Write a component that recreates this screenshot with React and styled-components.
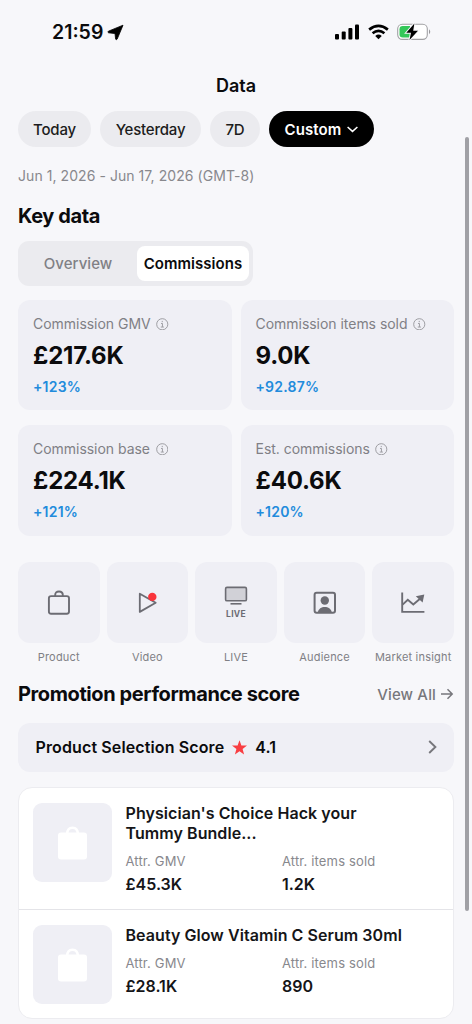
import React, { useState } from "react";
import styled, { createGlobalStyle } from 'styled-components'

const GlobalStyle = createGlobalStyle`
*{
  box-sizing: border-box;
}
body{
  margin: 0;
  background: #f7f7fa;
  color: #0b0b0d;
  font-family: Inter, "Liberation Sans", sans-serif;
}
button{
  border: none;
  padding: 0;
  background: none;
  color: inherit;
  font: inherit;
}
svg{
  display: block;
  flex-shrink: 0;
}
`

const Screen = styled.div`
position: relative;
width: 472px;
height: 1024px;
padding: 0 18px;
overflow: hidden;
background: #f7f7fa;
`

const StatusBar = styled.header`
display: flex;
justify-content: space-between;
align-items: center;
height: 64px;
padding: 0 22px 0 34px;
`

const Clock = styled.div`
display: flex;
align-items: center;
gap: 4px;
font-size: 19.5px;
font-weight: 600;
`

const StatusIcons = styled.div`
display: flex;
align-items: center;
gap: 8px;
`

const PageTitle = styled.h1`
margin: 10px 0 13px;
font-size: 18px;
font-weight: 600;
line-height: 24px;
text-align: center;
`

const Chips = styled.div`
display: flex;
gap: 9px;
`

const Chip = styled.button`
display: flex;
justify-content: center;
align-items: center;
gap: 6px;
width: ${props => props.width}px;
height: 36px;
border-radius: 18px;
background: ${props => props.selected ? '#000' : '#ebebef'};
color: ${props => props.selected ? '#fff' : '#1c1c20'};
font-size: 15px;
font-weight: ${props => props.selected ? 600 : 500};
letter-spacing: ${props => props.selected ? 0.1 : -0.2}px;
`

const DateRange = styled.div`
margin-top: 19px;
color: #88888d;
font-size: 14px;
letter-spacing: 0.06px;
line-height: 20px;
`

const SectionTitle = styled.h2`
margin: 0;
font-size: 20px;
font-weight: 700;
letter-spacing: -0.4px;
line-height: 26px;
`

const KeyTitle = styled(SectionTitle)`
margin: 17px 0 12px;
`

const Segments = styled.div`
display: flex;
width: 235px;
height: 45px;
padding: 5px 4px 5px 0;
border-radius: 11px;
background: #ebebef;
`

const Segment = styled.button`
flex: ${props => props.active ? '0 0 112px' : 1};
padding-left: ${props => props.active ? 0 : 1}px;
border-radius: 8px;
background: ${props => props.active ? '#fff' : 'transparent'};
color: ${props => props.active ? '#0b0b0d' : '#808085'};
font-size: 15px;
font-weight: ${props => props.active ? 600 : 500};
letter-spacing: 0.05px;
`

const Metrics = styled.div`
display: grid;
grid-template-columns: 1fr 1fr;
grid-template-rows: 110px 111px;
gap: 15px 9px;
margin-top: 14px;
`

const Metric = styled.div`
padding: 14px 15px 12px;
border-radius: 12px;
background: #efeff5;
`

const MetricLabel = styled.div`
display: flex;
align-items: center;
gap: 5.5px;
color: #808085;
font-size: 14px;
line-height: 20px;
letter-spacing: -0.03px;
white-space: nowrap;
`

const MetricValue = styled.div`
margin-top: 7px;
font-size: 24px;
font-weight: 700;
line-height: 30px;
letter-spacing: -0.2px;
`

const Change = styled.div`
margin-top: 6px;
color: #218bdc;
font-size: 14px;
font-weight: 600;
line-height: 20px;
letter-spacing: 0.2px;
`

const Shortcuts = styled.nav`
display: grid;
grid-template-columns: repeat(5, 1fr);
gap: 7px;
margin-top: 26px;
`

const Shortcut = styled.div`
display: flex;
flex-direction: column;
align-items: center;
min-width: 0;
color: #808085;
font-size: 11px;
line-height: 14px;
letter-spacing: 0.2px;
white-space: nowrap;
`

const Tile = styled.div`
display: flex;
flex-direction: column;
justify-content: center;
align-items: center;
width: 100%;
height: 81px;
margin-bottom: 7px;
border-radius: 12px;
background: #efeff5;
color: #6c6c73;
`

const LiveText = styled.span`
margin: 3px 0 -1px;
font-size: 8.5px;
font-weight: 700;
line-height: 11px;
letter-spacing: 0.3px;
`

const PromotionHead = styled.div`
display: flex;
justify-content: space-between;
align-items: center;
height: 26px;
margin-top: 17px;
`

const ViewAll = styled.div`
display: flex;
align-items: center;
gap: 4px;
color: #77777c;
font-size: 15px;
font-weight: 500;
letter-spacing: 0.15px;
`

const ScoreBar = styled.div`
display: flex;
align-items: center;
height: 49px;
margin-top: 16px;
padding: 0 17px 1px 17.5px;
border-radius: 12px;
background: #efeff5;
font-size: 16px;
font-weight: 600;
letter-spacing: 0.12px;

svg:last-child{
  margin-left: auto;
}
`

const Star = styled.svg`
margin: 0 8px;
`

const Products = styled.div`
margin-top: 15px;
border: 1px solid #ececf0;
border-radius: 14px;
background: #fff;
`

const ProductRow = styled.article`
display: flex;
gap: 13.5px;
height: ${props => props.height}px;
padding: 15px 14px;

& + &{
  border-top: 1px solid #e4e4e8;
}
`

const Thumb = styled.div`
display: flex;
justify-content: center;
align-items: center;
flex: 0 0 79px;
height: 79px;
border-radius: 9px;
background: #efeff5;
`

const Details = styled.div`
flex: 1;
`

const Name = styled.h3`
width: 290px;
margin: 0;
color: #151518;
font-size: 16px;
font-weight: 600;
line-height: 20px;
letter-spacing: 0.06px;
white-space: pre-line;
`

const Stats = styled.div`
display: grid;
grid-template-columns: 156.5px 1fr;
margin-top: 9px;
`

const StatLabel = styled.div`
color: #88888d;
font-size: 13px;
line-height: 18px;
letter-spacing: 0.15px;
`

const StatValue = styled.div`
margin-top: 3px;
color: #151518;
font-size: 16px;
font-weight: 600;
line-height: 22px;
`

const ScrollThumb = styled.div`
position: absolute;
top: 137px;
right: 3px;
width: 4px;
height: 774px;
border-radius: 2px;
background: #a0a0a5;
`

const LocationIcon = () => (
  <svg width="17" height="17" viewBox="0 0 17 17">
    <path d="M16 1.2 10.2 15.1Q9.3 16.6 8.6 15L8 9.6 1.6 8.8Q.2 8.2 1.4 7.2Z" fill="#000" stroke="#000" strokeLinejoin="round" strokeWidth=".8" />
  </svg>
)

const SignalIcon = () => (
  <svg width="25" height="16" viewBox="0 0 25 16">
    <rect x="0" y="10" width="4" height="5.5" rx="1" />
    <rect x="6.7" y="7.5" width="4" height="8" rx="1" />
    <rect x="13.4" y="4" width="4" height="11.5" rx="1" />
    <rect x="20" y="0.5" width="4" height="15" rx="1" />
  </svg>
)

const WifiIcon = () => (
  <svg width="21" height="16" viewBox="0 0 22 16" fill="none" stroke="#000" strokeWidth="2.8">
    <path d="M1.2 5.5Q11-2.5 20.8 5.5" />
    <path d="M4.8 9.3Q11 4.3 17.2 9.3" />
    <path d="M7.6 12.1Q11 9.3 14.4 12.1L11 15.5Z" fill="#000" stroke="none" />
  </svg>
)

const BatteryIcon = () => (
  <svg width="35" height="18" viewBox="0 0 35 18">
    <rect x=".7" y="1.2" width="29.6" height="15.2" rx="4.6" fill="#fff" stroke="#a1a1a4" strokeWidth="1.1" />
    <path d="M32 6.3Q34.5 8.8 32 11.3Z" fill="#98989b" />
    <path d="M5.7 3.1H13V14.5H5.7Q2.5 14.5 2.5 11.3V6.3Q2.5 3.1 5.7 3.1Z" fill="#34c759" />
    <path d="M17.4.5 9.3 9.8H14L12.5 17 21 7.7H16.2Z" stroke="#f7f7fa" strokeWidth="2" paintOrder="stroke" />
  </svg>
)

const InfoIcon = () => (
  <svg width="12.5" height="12.5" viewBox="0 0 13 13" fill="none" stroke="#929297" strokeWidth=".9">
    <circle cx="6.5" cy="6.5" r="5.8" />
    <path d="M5.2 5.7H6.7V9.2M5 9.4H8.2M6.5 3V4.3" />
  </svg>
)

const BagOutline = () => (
  <svg width="26" height="28" viewBox="0 0 26 28" fill="none" stroke="currentColor" strokeWidth="1.9">
    <rect x="2.9" y="7.1" width="20.1" height="17.7" rx="2.2" />
    <path d="M9.2 7V6.1Q9.2 2.5 13 2.5T16.8 6.1V7" />
  </svg>
)

const VideoIcon = () => (
  <svg width="24" height="26" viewBox="0 0 24 26">
    <path d="M4.8 3.8V21.9L20.7 12.8Z" fill="none" stroke="currentColor" strokeWidth="1.8" strokeLinejoin="round" />
    <circle cx="17.3" cy="6.9" r="4.2" fill="#f9343b" />
  </svg>
)

const LiveIcon = () => (
  <svg width="24" height="20" viewBox="0 0 24 20" fill="none" stroke="currentColor" strokeWidth="1.6">
    <rect x="1.6" y="1.4" width="20.8" height="13.4" rx="1.4" fill="#d1d1d7" />
    <path d="M6.5 17.8H17.5" />
  </svg>
)

const AudienceIcon = () => (
  <svg width="24" height="24" viewBox="0 0 24 24">
    <rect x="1.6" y="1.8" width="20.4" height="20" rx="2" fill="none" stroke="currentColor" strokeWidth="2" />
    <circle cx="11.8" cy="9.5" r="4.2" fill="currentColor" />
    <path d="M4.8 21.5C5.8 14.2 17.8 14.2 18.8 21.5Z" fill="currentColor" />
  </svg>
)

const MarketIcon = () => (
  <svg width="26" height="24" viewBox="0 0 26 24" fill="none" stroke="currentColor" strokeWidth="1.9">
    <path d="M2.2 1.5V20.9H24.4" />
    <path d="M2.6 13.6 7.8 8.8 13.3 13.4 20.6 7.2" />
    <path d="M15.8 5.2 24.3 3.5 22.6 11.6Z" fill="currentColor" stroke="none" />
  </svg>
)

const BagSolid = () => (
  <svg width="31" height="36" viewBox="0 0 31 36">
    <rect x="1" y="7.6" width="29" height="27" rx="3" fill="#fff" />
    <path d="M10.2 9Q10.2 2.7 15.5 2.7T20.8 9" fill="none" stroke="#fff" strokeWidth="2.5" />
  </svg>
)

const metrics = [
  { label: 'Commission GMV', value: '£217.6K', change: '+123%' },
  { label: 'Commission items sold', value: '9.0K', change: '+92.87%' },
  { label: 'Commission base', value: '£224.1K', change: '+121%' },
  { label: 'Est. commissions', value: '£40.6K', change: '+120%' },
]

const shortcuts = [
  { label: 'Product', icon: <BagOutline/> },
  { label: 'Video', icon: <VideoIcon/> },
  { label: 'LIVE', icon: <><LiveIcon/><LiveText>LIVE</LiveText></> },
  { label: 'Audience', icon: <AudienceIcon/> },
  { label: 'Market insight', icon: <MarketIcon/> },
]

const products = [
  { name: "Physician's Choice Hack your\nTummy Bundle...", gmv: '£45.3K', sold: '1.2K', height: 121 },
  { name: 'Beauty Glow Vitamin C Serum 30ml', gmv: '£28.1K', sold: '890', height: 109 },
]

const ranges = [
  { label: 'Today', width: 73 },
  { label: 'Yesterday', width: 101 },
  { label: '7D', width: 50 },
  { label: 'Custom', width: 105 },
]

const App = () => {
  const [range, setRange] = useState('Custom')
  const [tab, setTab] = useState('Commissions')

  return (
    <>
    <GlobalStyle/>
    <Screen>
      <StatusBar>
        <Clock>21:59<LocationIcon/></Clock>
        <StatusIcons><SignalIcon/><WifiIcon/><BatteryIcon/></StatusIcons>
      </StatusBar>
      <PageTitle>Data</PageTitle>
      <Chips>
        {ranges.map(item => (
          <Chip key={item.label} width={item.width} selected={range === item.label} onClick={() => setRange(item.label)}>
            {item.label}
            {item.label === 'Custom' &&
              <svg width="11" height="7" viewBox="0 0 11 7" fill="none" stroke="currentColor" strokeWidth="1.5">
                <path d="M.6 1 5.5 5.4 10.4 1" />
              </svg>
            }
          </Chip>
        ))}
      </Chips>
      <DateRange>Jun 1, 2026 - Jun 17, 2026 (GMT-8)</DateRange>
      <KeyTitle>Key data</KeyTitle>
      <Segments>
        {['Overview', 'Commissions'].map(name => (
          <Segment key={name} active={tab === name} onClick={() => setTab(name)}>{name}</Segment>
        ))}
      </Segments>
      <Metrics>
        {metrics.map(item => (
          <Metric key={item.label}>
            <MetricLabel>{item.label}<InfoIcon/></MetricLabel>
            <MetricValue>{item.value}</MetricValue>
            <Change>{item.change}</Change>
          </Metric>
        ))}
      </Metrics>
      <Shortcuts>
        {shortcuts.map(item => (
          <Shortcut key={item.label}>
            <Tile>{item.icon}</Tile>
            {item.label}
          </Shortcut>
        ))}
      </Shortcuts>
      <PromotionHead>
        <SectionTitle>Promotion performance score</SectionTitle>
        <ViewAll>
          View All
          <svg width="14" height="12" viewBox="0 0 14 12" fill="none" stroke="currentColor" strokeWidth="1.5">
            <path d="M1 6H12M7.5 1.3 12.2 6 7.5 10.7" />
          </svg>
        </ViewAll>
      </PromotionHead>
      <ScoreBar>
        Product Selection Score
        <Star width="15" height="15" viewBox="0 0 15 15">
          <path d="M7.5.2 9.4 5.4 15 5.6 10.6 9 12.1 14.4 7.5 11.3 2.9 14.4 4.4 9 0 5.6 5.6 5.4Z" fill="#f93e42" />
        </Star>
        4.1
        <svg width="9" height="14" viewBox="0 0 9 14" fill="none" stroke="#77777c" strokeWidth="1.9">
          <path d="M1.2 1 7.4 7 1.2 13" />
        </svg>
      </ScoreBar>
      <Products>
        {products.map(item => (
          <ProductRow key={item.name} height={item.height}>
            <Thumb><BagSolid/></Thumb>
            <Details>
              <Name>{item.name}</Name>
              <Stats>
                <div>
                  <StatLabel>Attr. GMV</StatLabel>
                  <StatValue>{item.gmv}</StatValue>
                </div>
                <div>
                  <StatLabel>Attr. items sold</StatLabel>
                  <StatValue>{item.sold}</StatValue>
                </div>
              </Stats>
            </Details>
          </ProductRow>
        ))}
      </Products>
      <ScrollThumb/>
    </Screen>
    </>
  );
};

export default App;
